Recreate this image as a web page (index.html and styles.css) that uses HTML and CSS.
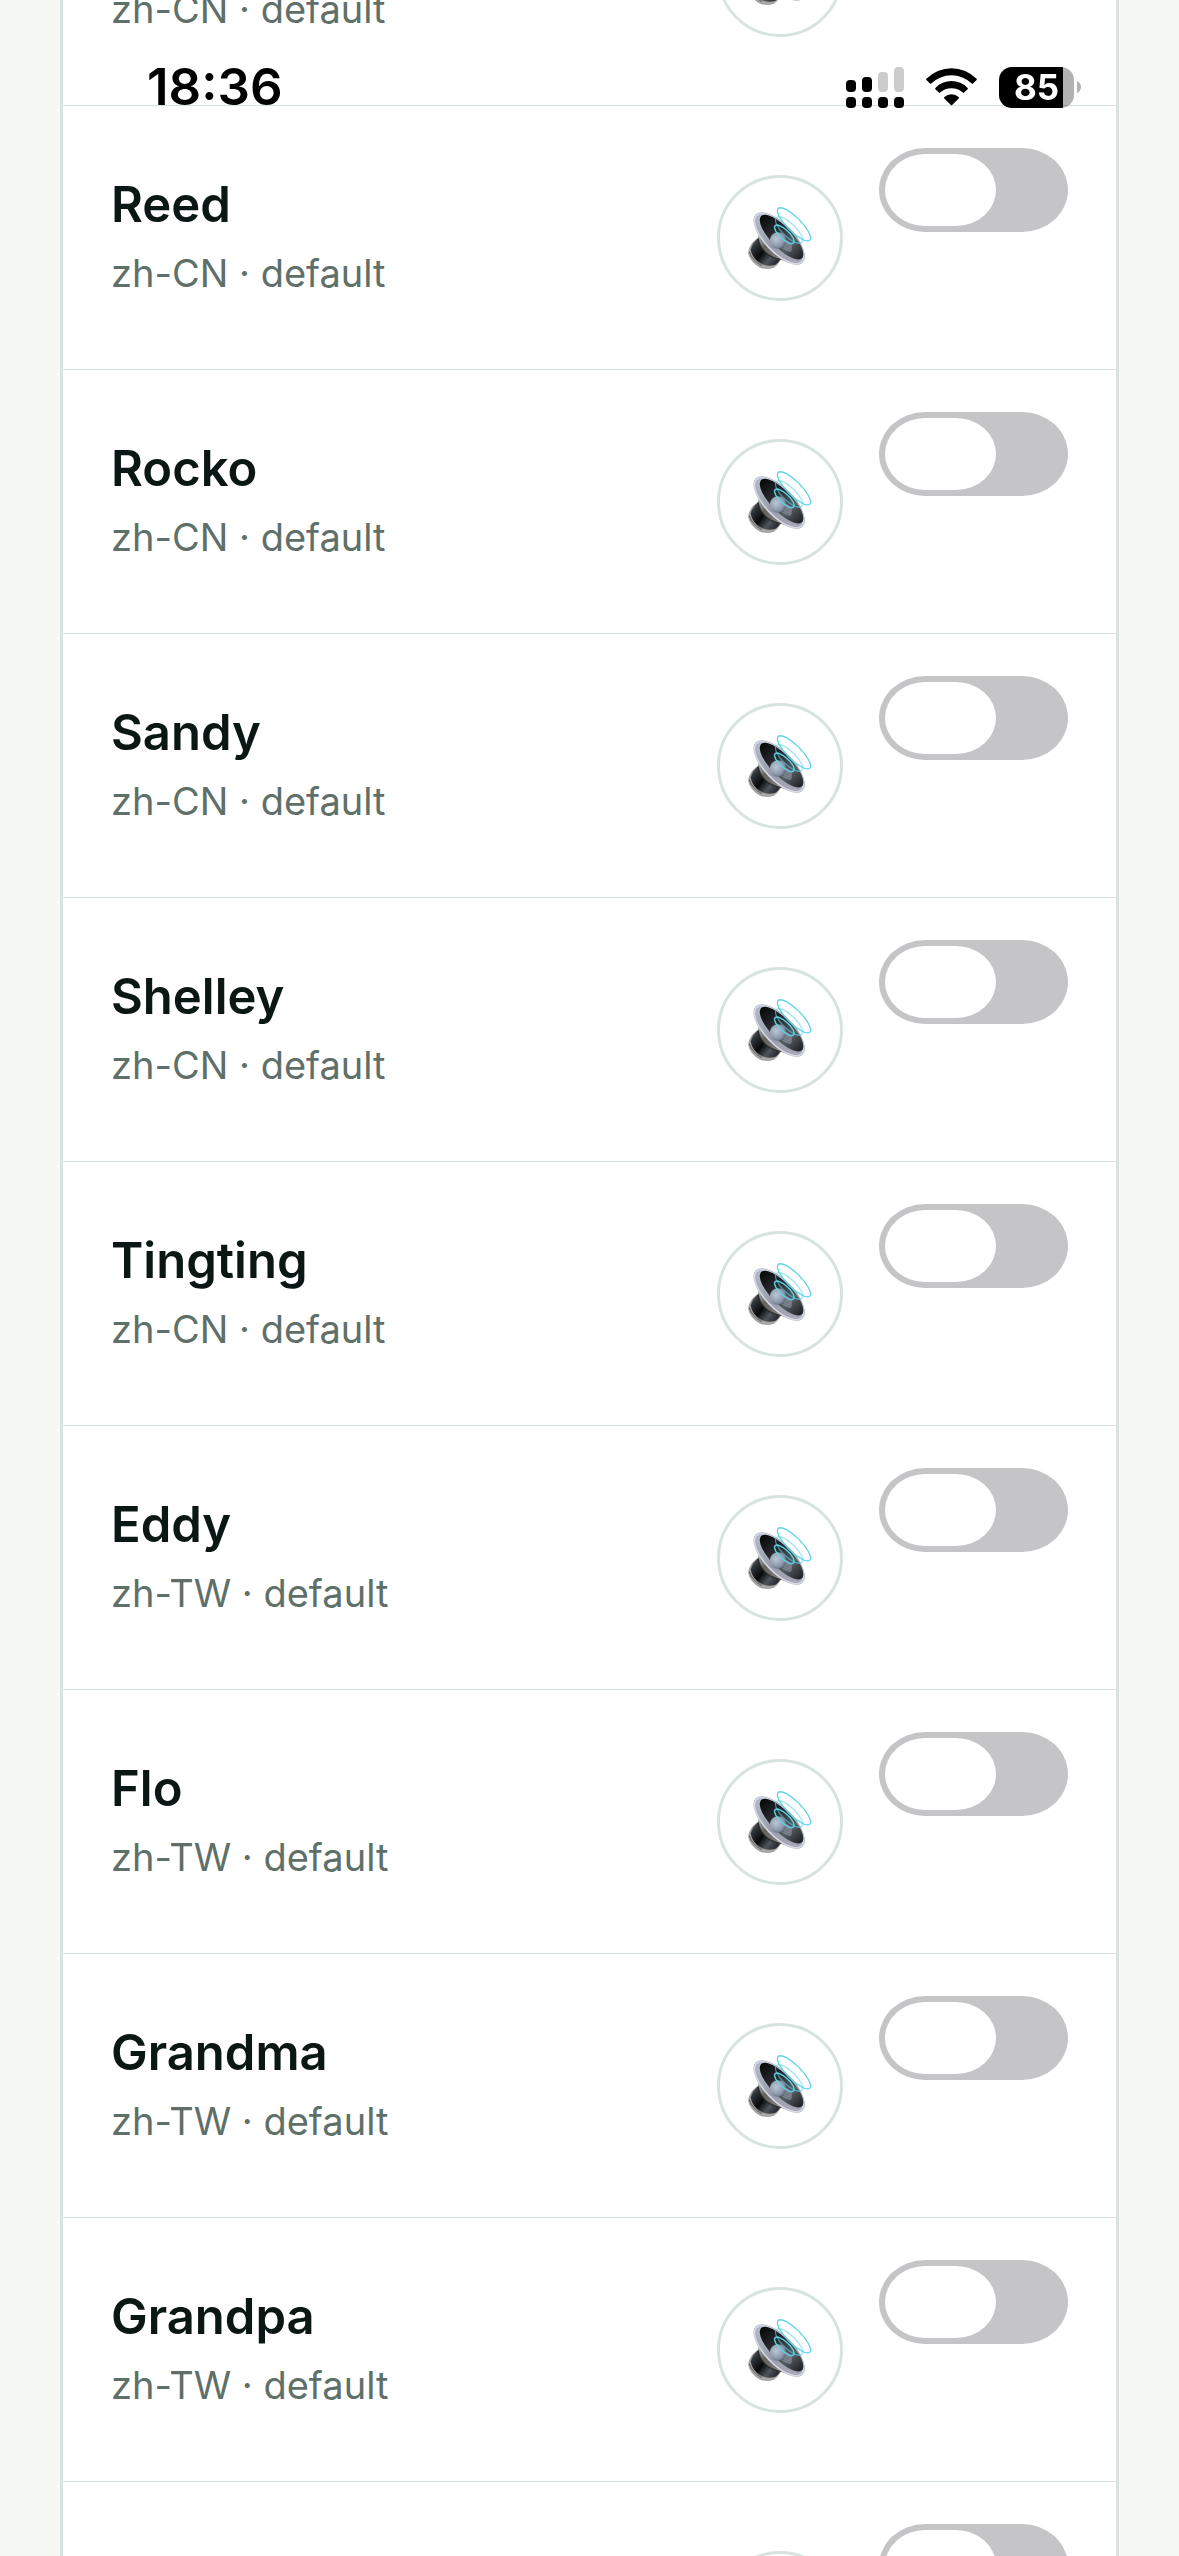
FILE: index.html
```html
<!DOCTYPE html>
<html lang="en">
<head>
  <meta charset="UTF-8">
  <title>Voices</title>
  <meta name="viewport" content="width=device-width, initial-scale=1.0">
  <link rel="stylesheet" href="styles.css">
</head>
<body>
  <svg class="defs" aria-hidden="true">
    <defs>
      <linearGradient id="rim" x1="0" y1="0" x2="1" y2="0">
        <stop offset="0" stop-color="#b3b9c9"/>
        <stop offset="0.5" stop-color="#999fab"/>
        <stop offset="1" stop-color="#a9acb8"/>
      </linearGradient>
      <linearGradient id="cone" x1="0" y1="0" x2="1" y2="0">
        <stop offset="0" stop-color="#060708"/>
        <stop offset="0.4" stop-color="#2b3035"/>
        <stop offset="0.7" stop-color="#555d64"/>
        <stop offset="1" stop-color="#1d2023"/>
      </linearGradient>
      <linearGradient id="magnet" x1="0" y1="0" x2="1" y2="0.8">
        <stop offset="0" stop-color="#6d7074"/>
        <stop offset="0.25" stop-color="#2b2e32"/>
        <stop offset="0.5" stop-color="#08090a"/>
        <stop offset="0.75" stop-color="#50555c"/>
        <stop offset="1" stop-color="#1f2124"/>
      </linearGradient>
      <linearGradient id="neck" x1="0" y1="0" x2="1" y2="1">
        <stop offset="0" stop-color="#c4c3c4"/>
        <stop offset="0.35" stop-color="#65615f"/>
        <stop offset="0.7" stop-color="#7d7976"/>
        <stop offset="1" stop-color="#d2cecb"/>
      </linearGradient>
      <radialGradient id="dome" cx="0.4" cy="0.4" r="0.65">
        <stop offset="0" stop-color="#bcc7d6"/>
        <stop offset="0.65" stop-color="#8f9dae"/>
        <stop offset="1" stop-color="#5f6c7a"/>
      </radialGradient>
    </defs>
    <symbol id="speaker" viewBox="114 108 192 192">
      <path d="M144 204Q118 219 114 248Q120 277 150 293Q172 301 192 293Q207 284 213 264L180 226Z" fill="#aaa5a2"/>
      <path d="M146 204Q127 216 122 239Q127 267 156 283Q176 291 196 284Q208 277 213 264L180 226Z" fill="url(#magnet)"/>
      <path d="M118 245Q126 272 156 287" fill="none" stroke="#3a3d40" stroke-width="2"/>
      <path d="M146 188Q140 210 154 233Q174 262 208 270Q228 273 244 272L214 226Z" fill="url(#neck)"/>
      <path d="M144 205Q148 229 166 247Q184 264 212 269" fill="none" stroke="#2a2c2f" stroke-width="4"/>
      <g transform="rotate(46 209 204)">
        <ellipse cx="209" cy="206" rx="101" ry="44" fill="url(#rim)"/>
        <ellipse cx="209" cy="207" rx="97" ry="40" fill="none" stroke="#d9dce4" stroke-width="4"/>
        <ellipse cx="211" cy="198" rx="88" ry="32" fill="url(#cone)"/>
      </g>
      <path d="M215 236Q234 224 220 200L245 222Q249 240 240 247Z" fill="#848e97" opacity="0.7"/>
      <circle cx="204" cy="212" r="25" fill="url(#dome)"/>
      <g fill="none" stroke="#5ed3e6" stroke-width="4">
        <ellipse cx="252" cy="163" rx="67" ry="21" transform="rotate(45 252 163)"/>
        <ellipse cx="237" cy="180" rx="53" ry="20" transform="rotate(44 237 180)" opacity="0.6"/>
        <ellipse cx="223" cy="193" rx="38" ry="14" transform="rotate(43 223 193)"/>
      </g>
    </symbol>
  </svg>

  <header class="status-bar">
    <time class="clock">18:36</time>
    <div class="status-icons">
      <svg class="signal" viewBox="0 0 58 41" aria-hidden="true">
        <rect x="0" y="13" width="10" height="12" rx="4"/>
        <rect x="16" y="10" width="10" height="15" rx="4"/>
        <rect class="dim" x="32" y="5" width="10" height="20" rx="4"/>
        <rect class="dim" x="48" y="0" width="10" height="25" rx="4"/>
        <rect x="0" y="30" width="10" height="11" rx="4"/>
        <rect x="16" y="30" width="10" height="11" rx="4"/>
        <rect x="32" y="30" width="10" height="11" rx="4"/>
        <rect x="48" y="30" width="10" height="11" rx="4"/>
      </svg>
      <svg class="wifi" viewBox="0 0 50 37" aria-hidden="true">
        <path d="M.4 10.4A34.5 34.5 0 0 1 49.6 10.4Q50.2 11 49.6 11.6L46.1 15.1Q45.5 15.7 44.9 15.1A28.5 28.5 0 0 0 5.1 15.1Q4.5 15.7 3.9 15.1L.4 11.6Q-.2 11 .4 10.4Z"/>
        <path d="M9.2 19.4A22 22 0 0 1 40.8 19.4Q41.4 20 40.8 20.6L37.4 24Q36.8 24.6 36.2 24A16.5 16.5 0 0 0 13.8 24Q13.2 24.6 12.6 24L9.2 20.6Q8.6 20 9.2 19.4Z"/>
        <path d="M18 28.3A10.5 10.5 0 0 1 32 28.3Q32.8 29 32.1 29.7L25.6 36.2Q25 36.8 24.4 36.2L17.9 29.7Q17.2 29 18 28.3Z"/>
      </svg>
      <div class="battery">
        <span class="battery-level">85</span>
        <svg class="battery-cap" viewBox="0 0 4 12" aria-hidden="true"><path d="M0 0Q4 2 4 6T0 12Z"/></svg>
      </div>
    </div>
  </header>

  <main class="page">
    <ul class="voice-list">
      <li class="voice">
        <label class="voice-text" for="v1"><span class="name">Grandpa</span><span class="meta">zh-CN · default</span></label>
        <button class="play" type="button" aria-label="Play"><svg><use href="#speaker"/></svg></button>
        <input class="toggle" type="checkbox" id="v1">
      </li>
      <li class="voice">
        <label class="voice-text" for="v2"><span class="name">Reed</span><span class="meta">zh-CN · default</span></label>
        <button class="play" type="button" aria-label="Play"><svg><use href="#speaker"/></svg></button>
        <input class="toggle" type="checkbox" id="v2">
      </li>
      <li class="voice">
        <label class="voice-text" for="v3"><span class="name">Rocko</span><span class="meta">zh-CN · default</span></label>
        <button class="play" type="button" aria-label="Play"><svg><use href="#speaker"/></svg></button>
        <input class="toggle" type="checkbox" id="v3">
      </li>
      <li class="voice">
        <label class="voice-text" for="v4"><span class="name">Sandy</span><span class="meta">zh-CN · default</span></label>
        <button class="play" type="button" aria-label="Play"><svg><use href="#speaker"/></svg></button>
        <input class="toggle" type="checkbox" id="v4">
      </li>
      <li class="voice">
        <label class="voice-text" for="v5"><span class="name">Shelley</span><span class="meta">zh-CN · default</span></label>
        <button class="play" type="button" aria-label="Play"><svg><use href="#speaker"/></svg></button>
        <input class="toggle" type="checkbox" id="v5">
      </li>
      <li class="voice">
        <label class="voice-text" for="v6"><span class="name">Tingting</span><span class="meta">zh-CN · default</span></label>
        <button class="play" type="button" aria-label="Play"><svg><use href="#speaker"/></svg></button>
        <input class="toggle" type="checkbox" id="v6">
      </li>
      <li class="voice">
        <label class="voice-text" for="v7"><span class="name">Eddy</span><span class="meta">zh-TW · default</span></label>
        <button class="play" type="button" aria-label="Play"><svg><use href="#speaker"/></svg></button>
        <input class="toggle" type="checkbox" id="v7">
      </li>
      <li class="voice">
        <label class="voice-text" for="v8"><span class="name">Flo</span><span class="meta">zh-TW · default</span></label>
        <button class="play" type="button" aria-label="Play"><svg><use href="#speaker"/></svg></button>
        <input class="toggle" type="checkbox" id="v8">
      </li>
      <li class="voice">
        <label class="voice-text" for="v9"><span class="name">Grandma</span><span class="meta">zh-TW · default</span></label>
        <button class="play" type="button" aria-label="Play"><svg><use href="#speaker"/></svg></button>
        <input class="toggle" type="checkbox" id="v9">
      </li>
      <li class="voice">
        <label class="voice-text" for="v10"><span class="name">Grandpa</span><span class="meta">zh-TW · default</span></label>
        <button class="play" type="button" aria-label="Play"><svg><use href="#speaker"/></svg></button>
        <input class="toggle" type="checkbox" id="v10">
      </li>
      <li class="voice">
        <label class="voice-text" for="v11"><span class="name">Reed</span><span class="meta">zh-TW · default</span></label>
        <button class="play" type="button" aria-label="Play"><svg><use href="#speaker"/></svg></button>
        <input class="toggle" type="checkbox" id="v11">
      </li>
    </ul>
  </main>
</body>
</html>
```
FILE: styles.css
```css
* {
  box-sizing: border-box;
}
body {
  margin: 0;
  background: #f5f8f3;
  color: #0b1714;
  font-family: Inter, "Liberation Sans", sans-serif;
}
.defs {
  position: absolute;
  width: 0;
  height: 0;
}

/* status bar floats over the scrolled list */
.status-bar {
  position: fixed;
  top: 0;
  left: 0;
  right: 0;
  z-index: 1;
  display: flex;
  justify-content: space-between;
  align-items: center;
  padding: 57px 98px 0 147px;
  color: #000;
}
.clock {
  font-size: 51px;
  line-height: 60px;
  font-weight: 600;
}
.status-icons {
  display: flex;
  align-items: center;
  gap: 22px;
}
.signal {
  width: 58px;
  height: 41px;
}
.signal .dim {
  fill: #ccc;
}
.wifi {
  width: 51px;
  height: 38px;
}
.battery {
  display: flex;
  align-items: center;
  gap: 3px;
}
.battery-level {
  width: 75px;
  height: 41px;
  border-radius: 13px;
  background: linear-gradient(to right, #000 64px, rgba(0,0,0,0.3) 64px);
  color: #fff;
  font-size: 35px;
  line-height: 41px;
  font-weight: 700;
  text-align: center;
}
.battery-cap {
  width: 4px;
  height: 12px;
  fill: #b3b3b3;
}

/* the list is scrolled part of the way down */
.page {
  height: 100vh;
  overflow: hidden;
  padding: 0 60px;
}
.voice-list {
  list-style: none;
  margin: -158px 0 0;
  padding: 0;
  background: #fff;
  border: solid #d8e3df;
  border-width: 0 3px;
}
.voice {
  display: flex;
  align-items: center;
  gap: 36px;
  min-height: 264px;
  padding: 42px 48px;
  border-bottom: 1px solid #d8e3df;
}
.voice-text {
  flex: 1;
  display: flex;
  flex-direction: column;
  gap: 14px;
  padding-bottom: 4px;
}
.name {
  font-size: 49px;
  line-height: 60px;
  font-weight: 600;
}
.meta {
  color: #5f6f6a;
  font-size: 38px;
  line-height: 48px;
}
.play {
  display: flex;
  align-items: center;
  justify-content: center;
  width: 126px;
  height: 126px;
  padding: 0;
  border: 3px solid #d8e3df;
  border-radius: 50%;
  background: #fff;
}
.play svg {
  width: 64px;
  height: 64px;
}
.toggle {
  appearance: none;
  align-self: flex-start;
  width: 189px;
  height: 84px;
  margin: 0;
  padding: 6px;
  border-radius: 46px / 42px;
  background: #c5c5c7;
}
.toggle::before {
  content: "";
  display: block;
  width: 111px;
  height: 72px;
  border-radius: 40px / 36px;
  background: #fff;
}
.toggle:checked {
  background: #34c759;
}
.toggle:checked::before {
  margin-left: auto;
}
```
